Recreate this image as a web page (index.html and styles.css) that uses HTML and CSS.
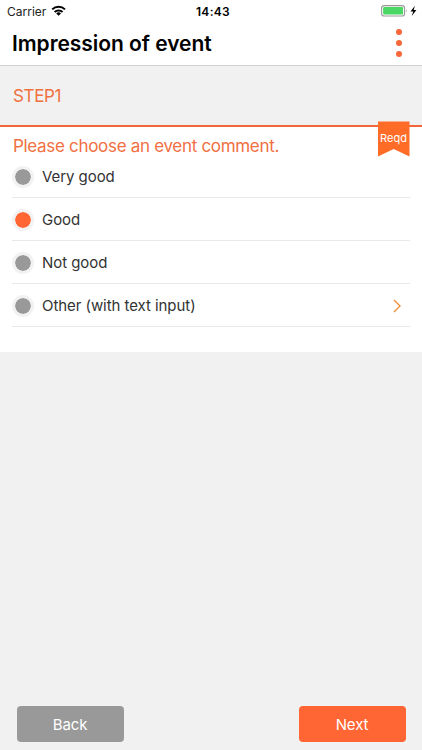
FILE: index.html
```html
<!DOCTYPE html>
<html lang="en">
<head>
<meta charset="utf-8">
<title>Impression of event</title>
<link rel="stylesheet" href="styles.css">
</head>
<body>
<div class="screen">
  <div class="status">
    <div class="carrier"><span class="carrier-name">Carrier</span>
      <svg class="wifi" width="16" height="12" viewBox="0 0 16 12"><g fill="none" stroke="#000" stroke-width="2"><path d="M1.2 4.4a9.2 9.2 0 0 1 12.8 0"/><path d="M3.6 7a5.8 5.8 0 0 1 8 0"/></g><path d="M7.6 10.8 5.2 8.4a3.4 3.4 0 0 1 4.8 0z"/></svg>
    </div>
    <span class="time">14:43</span>
    <svg class="battery" width="38" height="12" viewBox="0 0 38 12"><rect x=".6" y=".6" width="23" height="10.4" rx="2.6" fill="#fff" stroke="#999" stroke-width="1.1"/><rect x="2.1" y="2.1" width="20" height="7.4" rx="1.1" fill="#4bd763"/><path d="M25.1 4.2q1.6 1.6 0 3.2z" fill="#999"/><path d="M33.9.8 29.5 6.5h2.7l-1.4 4.6 4.6-6h-2.7z"/></svg>
  </div>
  <header class="header">
    <h1 class="title">Impression of event</h1>
    <div class="menu"><i></i><i></i><i></i></div>
  </header>
  <div class="step"><span>STEP1</span></div>
  <main class="question">
    <svg class="ribbon" width="32" height="36" viewBox="0 0 32 36"><path d="M0 .5h31.5v34.9L15.7 28 0 35.4z" fill="#ff6c28"/></svg>
    <span class="ribbon-text">Reqd</span>
    <h2 class="prompt">Please choose an event comment.</h2>
    <div class="option first"><i class="radio"></i><span class="label">Very good</span></div>
    <div class="option"><i class="radio on"></i><span class="label">Good</span></div>
    <div class="option"><i class="radio"></i><span class="label">Not good</span></div>
    <div class="option"><i class="radio"></i><span class="label">Other (with text input)</span>
      <svg class="chevron" width="8" height="14" viewBox="0 0 8 14"><path d="M1 1l6 6-6 6" fill="none" stroke="#ef9137" stroke-width="1.4"/></svg>
    </div>
  </main>
  <footer class="footer">
    <div class="button back"><span>Back</span></div>
    <div class="button next"><span>Next</span></div>
  </footer>
</div>
</body>
</html>
```
FILE: styles.css
```css
* { box-sizing: border-box; }
body { margin: 0; background: #f1f1f1; font-family: Inter, "Liberation Sans", sans-serif; color: #333; }
.screen { width: 422px; height: 750px; display: flex; flex-direction: column; overflow: hidden; }
.status { height: 22px; background: #fff; display: grid; grid-template-columns: 1fr auto 1fr; align-items: center; padding: 0 3px 0 7px; color: #000; font-size: 12px; }
.carrier { display: flex; align-items: center; gap: 5px; }
.carrier-name { letter-spacing: 0; color: #222; }
.wifi { margin-top: -1px; }
.time { font-weight: 600; font-size: 12px; letter-spacing: .3px; }
.battery { justify-self: end; }
.header { height: 44px; background: #fff; border-bottom: 1px solid #d0d0d0; display: flex; align-items: center; justify-content: space-between; padding: 0 20px 0 12px; }
.title { margin: 0; color: #000; font-size: 21px; font-weight: 600; letter-spacing: -.05px; }
.menu { display: flex; flex-direction: column; gap: 5px; margin-top: -2px; }
.menu i { width: 6px; height: 6px; border-radius: 50%; background: #f7673a; }
.step { height: 61px; border-bottom: 2px solid #f0683a; display: flex; align-items: center; padding: 0 13px; color: #f0703f; font-size: 17px; letter-spacing: -.35px; }
.question { height: 225px; background: #fff; padding: 8px 12px 0; position: relative; }
.ribbon { position: absolute; left: 378px; top: -6px; }
.ribbon-text { position: absolute; left: 380px; top: 4px; font-size: 11px; line-height: 14px; color: #fff; letter-spacing: .1px; }
.prompt { margin: 0; height: 21px; line-height: 22px; font-size: 17px; font-weight: 400; color: #f0703f; padding-left: 1px; letter-spacing: -.31px; }
.option { height: 43px; border-bottom: 1px solid #e9e9e9; display: flex; align-items: center; padding-top: 1px; }
.option.first { height: 42px; }
.radio { width: 22px; height: 22px; border-radius: 50%; border: 3px solid #f2f2f2; background: #999; background-clip: padding-box; margin-right: 8px; }
.radio.on { background-color: #ff6634; }
.label { font-size: 15px; line-height: 20px; letter-spacing: -.06px; }
.chevron { margin-left: auto; margin-right: 9px; }
.footer { margin-top: auto; height: 44px; display: flex; justify-content: space-between; padding: 0 16.5px; }
.button { width: 107px; height: 36px; border-radius: 4px; display: flex; align-items: center; justify-content: center; font-size: 15px; letter-spacing: -.1px; color: #fff; }
.back { background: #999; }
.next { background: #ff6634; }
```
